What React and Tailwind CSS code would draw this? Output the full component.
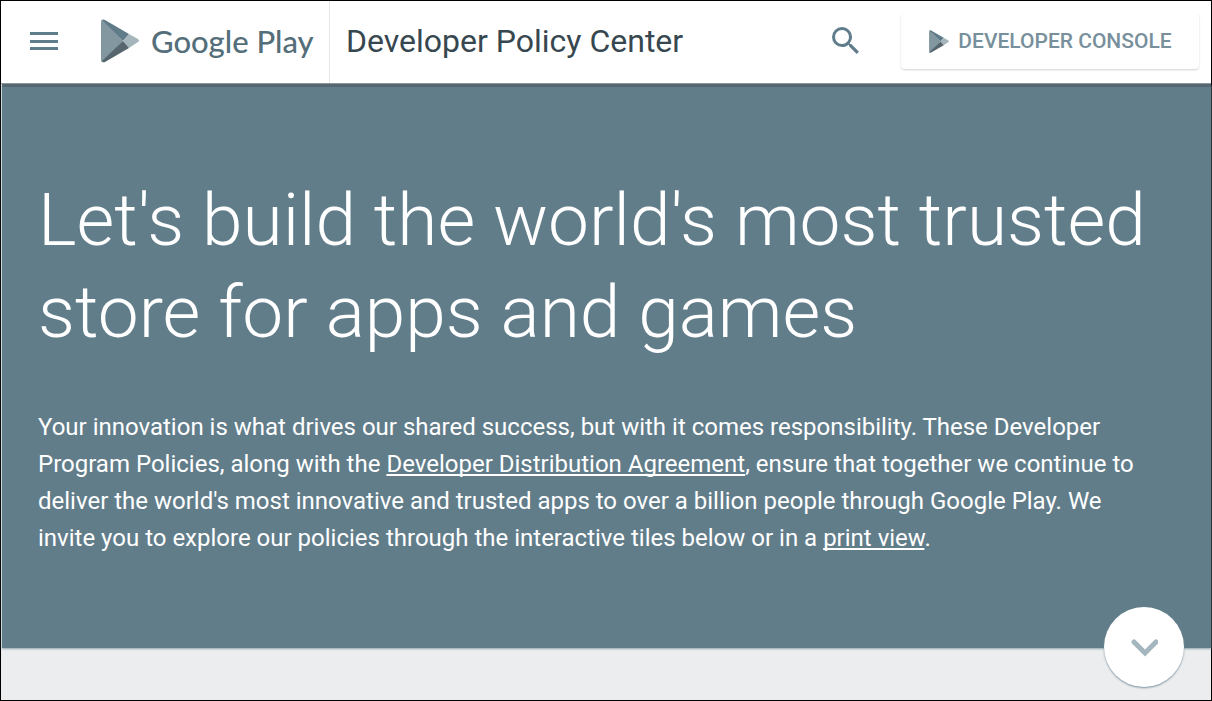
import React from "react";

function PlayMark({ className }) {
  return (
    <svg viewBox="0 0 38 44" className={className} aria-hidden="true">
      <path d="M2 1 Q0 0 0 3 L0 41 Q0 44 3 43 L22 22 Z" fill="#82979f" />
      <path d="M1 1 Q2 0 4 1 L28 15 L22 22 Z" fill="#5f7b88" />
      <path d="M28 15 L37 20 Q39 22 37 23 L28 29 L22 22 Z" fill="#a5b5bc" />
      <path d="M22 22 L28 29 L4 43 Q2 44 1 42 Z" fill="#56656e" />
    </svg>
  );
}

function Header() {
  return (
    <header className="flex h-[83px] items-stretch border-b border-[#87979f] bg-white text-[#546e7a]">
      <button type="button" aria-label="Menu" className="flex w-[57px] shrink-0 items-center justify-end pb-0.5">
        <svg viewBox="0 0 28 20" className="h-5 w-7" fill="#607d8b" aria-hidden="true">
          <path d="M0 1h28v3H0zM0 9h28v3H0zM0 16h28v3H0z" />
        </svg>
      </button>
      <a href="#home" className="ml-[43px] flex shrink-0 items-center gap-3 border-r border-[#e4e6e8] pr-[18px] pb-0.5">
        <PlayMark className="h-11 w-[38px]" />
        <span className="w-40 font-['Lato',sans-serif] text-[31px] leading-10 font-medium whitespace-nowrap">
          Google Play
        </span>
      </a>
      <a href="#policy" className="ml-4 flex items-center pb-0.5 text-[32px] leading-10 whitespace-nowrap text-[#37474f]">
        Developer Policy Center
      </a>
      <div className="ml-auto flex shrink-0 items-start">
        <button type="button" aria-label="Search" className="mt-[19px] mr-9 flex h-10 w-10 items-center justify-center">
          <svg viewBox="3 3 17.5 17.5" className="h-[27px] w-[27px]" fill="#607d8b" aria-hidden="true">
            <path d="M15.5 14h-.79l-.28-.27A6.471 6.471 0 0 0 16 9.5 6.5 6.5 0 1 0 9.5 16c1.61 0 3.09-.59 4.23-1.57l.27.28v.79l5 4.99L20.49 19l-4.99-5zm-6 0C7.01 14 5 11.99 5 9.5S7.01 5 9.5 5 14 7.01 14 9.5 11.99 14 9.5 14z" />
          </svg>
        </button>
        <a
          href="#console"
          className="mt-3 mr-3 flex h-14 w-[298px] items-center justify-center gap-2 rounded bg-white text-[21px] leading-8 font-medium whitespace-nowrap text-[#78909c] shadow-[0_1px_2px_rgba(0,0,0,0.18)]"
        >
          <PlayMark className="h-[23px] w-[22px]" />
          DEVELOPER CONSOLE
        </a>
      </div>
    </header>
  );
}

export default function App() {
  return (
    <div className="flex min-h-screen flex-col border border-black bg-[#ecedef] font-['Roboto',sans-serif]">
      <Header />
      <main className="relative ml-px border-t-[3px] border-[#57676f] bg-[#617d8a] px-9 pt-[87px] pb-[91px] text-white shadow-[0_1px_2px_#90a4ae]">
        <h1 className="text-[73px] leading-[92px] font-light">
          Let&#39;s build the world&#39;s most trusted
          <br />
          store for apps and games
        </h1>
        <p className="mt-[51px] max-w-[1130px] text-[24px] leading-[37px]">
          Your innovation is what drives our shared success, but with it comes responsibility. These Developer
          <br />
          Program Policies, along with the{" "}
          <a href="#agreement" className="underline decoration-2 underline-offset-2 [text-decoration-skip-ink:none]">Developer Distribution Agreement</a>, ensure that
          together we continue to
          <br />
          deliver the world&#39;s most innovative and trusted apps to over a billion people through Google Play. We
          <br />
          invite you to explore our policies through the interactive tiles below or in a{" "}
          <a href="#print" className="underline decoration-2 underline-offset-2 [text-decoration-skip-ink:none]">print view</a>.
        </p>
        <button
          type="button"
          aria-label="Scroll down"
          className="absolute right-[27px] -bottom-[39px] flex h-20 w-20 items-center justify-center rounded-full bg-white shadow-[0_1px_2px_#78909c]"
        >
          <svg viewBox="0 0 28 20" className="h-5 w-7" fill="none" stroke="#a5b7be" strokeWidth="5" strokeLinecap="round" aria-hidden="true">
            <path d="M4 5 L15 16 L26 5" />
          </svg>
        </button>
      </main>
    </div>
  );
}
